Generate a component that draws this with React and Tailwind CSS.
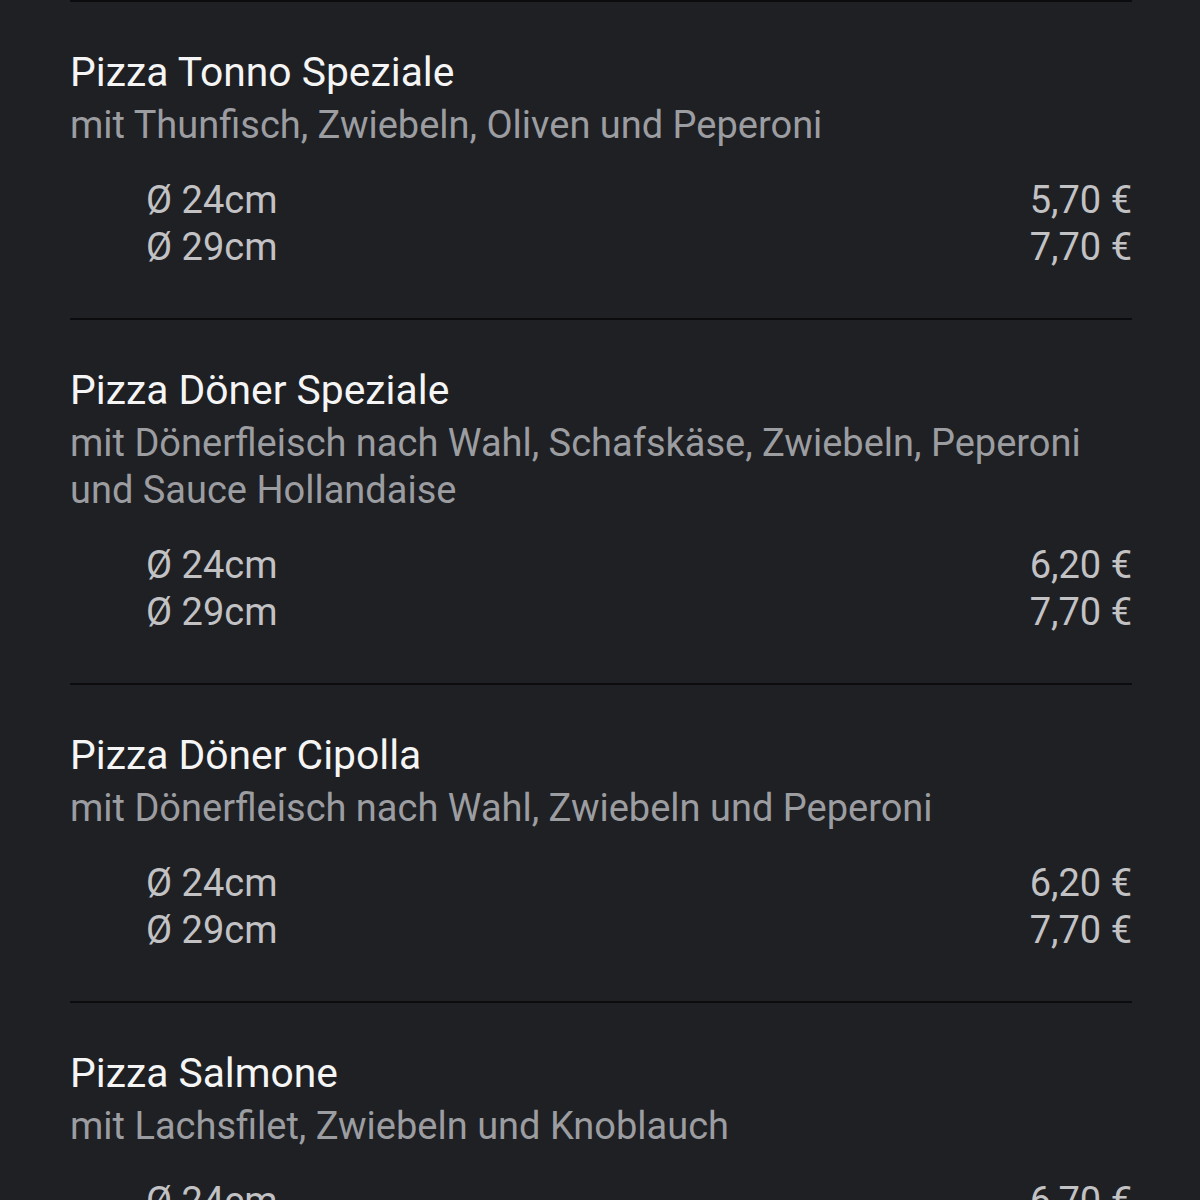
const pizzas = [
    {
        name: 'Pizza Tonno Speziale',
        desc: 'mit Thunfisch, Zwiebeln, Oliven und Peperoni',
        prices: ['5,70 €', '7,70 €'],
    },
    {
        name: 'Pizza Döner Speziale',
        desc: 'mit Dönerfleisch nach Wahl, Schafskäse, Zwiebeln, Peperoni und Sauce Hollandaise',
        prices: ['6,20 €', '7,70 €'],
    },
    {
        name: 'Pizza Döner Cipolla',
        desc: 'mit Dönerfleisch nach Wahl, Zwiebeln und Peperoni',
        prices: ['6,20 €', '7,70 €'],
    },
    {
        name: 'Pizza Salmone',
        desc: 'mit Lachsfilet, Zwiebeln und Knoblauch',
        prices: ['6,70 €', '8,70 €'],
    },
];

const sizes = ['Ø 24cm', 'Ø 29cm'];

export default function App() {
    return (
        <div className="h-[1200px] overflow-hidden bg-[#1f2024] pl-[70px] pr-[68px] font-['Roboto',sans-serif] text-[38px] leading-[47px]">
            {pizzas.map((pizza) => (
                <div key={pizza.name} className="border-t-2 border-[#0c0c0e] pt-[47px] pb-[47px]">
                    <h3 className="text-[40.8px] leading-[47px] text-[#f5f5f5] mb-[6px]">{pizza.name}</h3>
                    <p className="text-[#9c9da1]">{pizza.desc}</p>
                    <div className="mt-[28px] pl-[76px] text-[#c2c2c4]">
                        {sizes.map((size, i) => (
                            <div key={size} className="flex justify-between">
                                <span>{size}</span>
                                <span>{pizza.prices[i]}</span>
                            </div>
                        ))}
                    </div>
                </div>
            ))}
        </div>
    );
}
